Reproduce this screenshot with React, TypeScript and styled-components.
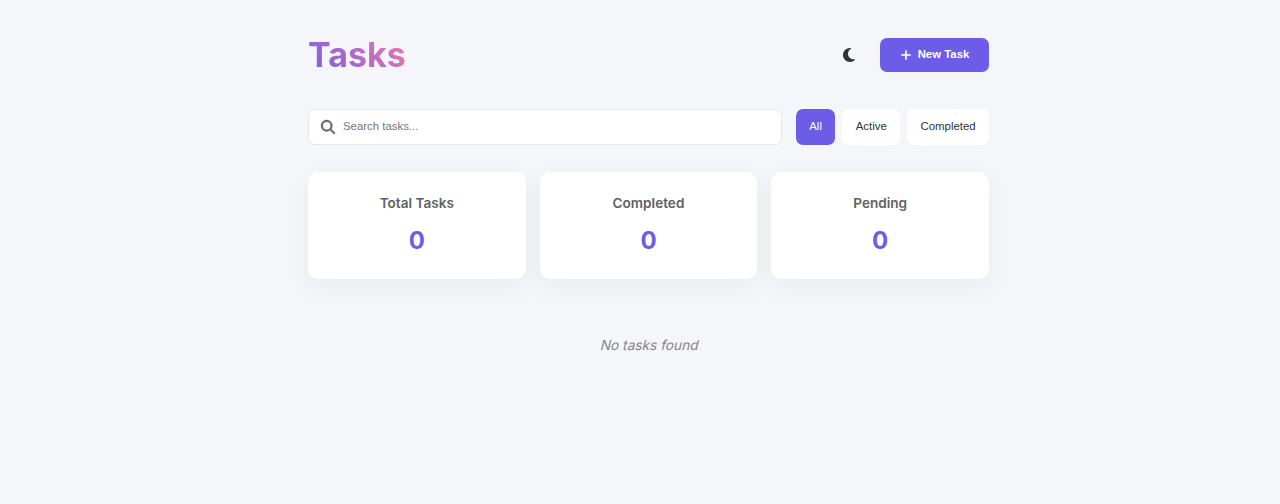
import React from 'react';
import styled, { createGlobalStyle } from 'styled-components';
import { FaMoon, FaPlus, FaMagnifyingGlass } from 'react-icons/fa6';

const GlobalStyle = createGlobalStyle`
  * { box-sizing: border-box; margin: 0; padding: 0; }
  body { background: #f5f6fa; color: #2d3436; font-family: Inter, sans-serif; line-height: 1.6; }
`;
const Container = styled.main`width: 681px; margin: 0 0 0 308px; padding-top: 27px;`;
const Header = styled.header`display: flex; justify-content: space-between; align-items: center; height: 55px; margin-bottom: 27px;`;
const Title = styled.h1`
  font-size: 34px; font-weight: 700; line-height: 55px;
  background: linear-gradient(45deg, #6c5ce7, #fd79a8);
  background-clip: text; -webkit-background-clip: text; color: transparent;
`;
const Actions = styled.div`display: flex; align-items: center; gap: 14px;`;
const ThemeToggle = styled.button`display: flex; padding: 9px; border: 0; background: none; color: #2d3436; font-size: 16px;`;
const NewTask = styled.button`
  display: flex; align-items: center; justify-content: center; gap: 6px; width: 109px; height: 34px;
  padding-bottom: 1px; border: 0; border-radius: 7px; background: #6c5ce7; color: #fff;
  font: 600 11.4px "Liberation Sans", sans-serif;
  svg { font-size: 12px; margin-top: 1px; stroke: currentColor; stroke-width: 10px; }
`;
const Controls = styled.div`display: flex; gap: 14px; height: 36px; margin-bottom: 27px;`;
const SearchBox = styled.label`
  display: flex; flex: 1; align-items: center; gap: 8px; padding: 0 12px 1px;
  border: 1px solid #e5e7ec; border-radius: 7px; background: #fff; color: #636768;
  svg { stroke: currentColor; stroke-width: 14px; overflow: visible; }
`;
const SearchInput = styled.input`
  flex: 1; border: 0; outline: 0; background: none; padding-bottom: 1px;
  font: 11.4px "Liberation Sans", sans-serif;
  &::placeholder { color: #757575; }
`;
const Filters = styled.div`display: flex; gap: 7px;`;
const Filter = styled.button<{ $active?: boolean }>`
  padding: 0 13.4px 2px; border: 0; border-radius: 7px;
  background: ${p => p.$active ? '#6c5ce7' : '#fff'}; color: ${p => p.$active ? '#fff' : '#2d3436'};
  font: 11.4px "Liberation Sans", sans-serif;
`;
const Stats = styled.section`display: grid; grid-template-columns: repeat(3, 1fr); gap: 14px; margin-bottom: 27px;`;
const Card = styled.article`
  height: 107px; padding-top: 20px; text-align: center; border-radius: 10px; background: #fff;
  box-shadow: 0 8px 27px rgba(0,0,0,.05);
`;
const CardTitle = styled.h3`font-size: 13.6px; line-height: 22px; font-weight: 600; color: #5d6263; margin-bottom: 8px;`;
const Count = styled.p`font-size: 24px; line-height: 38px; font-weight: 700; color: #6c5ce7;`;
const Empty = styled.p`
  padding-top: 28px; padding-left: 2px; text-align: center;
  color: #84868a; font-size: 13.7px; line-height: 22px;
`;
const Slanted = styled.span`display: inline-block; transform: skewX(-14deg);`;

export default function App() {
  return (
    <><GlobalStyle /><Container>
      <Header><Title>Tasks</Title><Actions>
        <ThemeToggle aria-label="Toggle theme"><FaMoon /></ThemeToggle>
        <NewTask><FaPlus />New Task</NewTask>
      </Actions></Header>
      <Controls>
        <SearchBox><FaMagnifyingGlass size={14} /><SearchInput placeholder="Search tasks..." /></SearchBox>
        <Filters><Filter $active>All</Filter><Filter>Active</Filter><Filter>Completed</Filter></Filters>
      </Controls>
      <Stats>{['Total Tasks', 'Completed', 'Pending'].map(label => (
        <Card key={label}><CardTitle>{label}</CardTitle><Count>0</Count></Card>
      ))}</Stats>
      <Empty><Slanted>No tasks found</Slanted></Empty>
    </Container></>
  );
}
